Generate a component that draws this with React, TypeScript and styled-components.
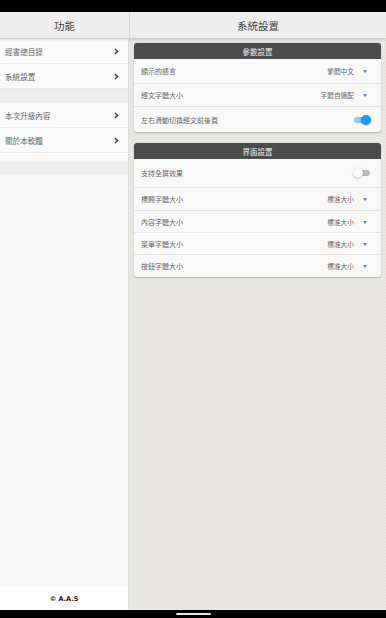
import React from "react";
import styled, { createGlobalStyle } from "styled-components";

const Global = createGlobalStyle`
  html, body { margin: 0; padding: 0; }
  body {
    width: 386px;
    height: 618px;
    overflow: hidden;
    font-family: "Noto Sans CJK TC", "Noto Sans", sans-serif;
    background: #000;
  }
  #root { height: 100%; }
`;

const Screen = styled.div`
  width: 386px;
  height: 618px;
  display: flex;
  flex-direction: column;
`;

const StatusBar = styled.div`
  height: 12px;
  background: #000;
  flex: none;
`;

const NavBar = styled.div`
  height: 8px;
  background: #000;
  flex: none;
  display: flex;
  justify-content: center;
  align-items: flex-start;
  padding-top: 3px;
  box-sizing: border-box;
`;

const HomeLine = styled.div`
  width: 35px;
  height: 1.5px;
  background: #e6e6e6;
  border-radius: 1px;
`;

const Header = styled.div`
  height: 27px;
  flex: none;
  display: flex;
  background: #eeeeee;
  border-bottom: 1px solid #d2d2d2;
  box-sizing: border-box;
  box-shadow: 0 1px 2px rgba(0, 0, 0, 0.12);
  position: relative;
  z-index: 1;
`;

const HeaderCell = styled.div<{ $w?: number }>`
  ${(p) => (p.$w ? `width: ${p.$w}px; flex: none;` : "flex: 1;")}
  display: flex;
  align-items: center;
  justify-content: center;
  font-size: 10.5px;
  color: #444;
  ${(p) => (p.$w ? "border-right: 1px solid #d6d6d6;" : "")}
`;

const Main = styled.div`
  flex: 1;
  display: flex;
  min-height: 0;
`;

const LeftPanel = styled.div`
  width: 128px;
  flex: none;
  display: flex;
  flex-direction: column;
  background: #f8f8f8;
  border-right: 1px solid #dedede;
`;

const MenuRow = styled.div`
  height: 25px;
  box-sizing: border-box;
  border-bottom: 1px solid #ececec;
  background: #fafafa;
  display: flex;
  align-items: center;
  justify-content: space-between;
  padding: 0 9px 0 5px;
  font-size: 7.6px;
  color: #666;
`;

const Band = styled.div<{ $h: number; $c: string }>`
  height: ${(p) => p.$h}px;
  background: ${(p) => p.$c};
  flex: none;
`;

const Spacer = styled.div`
  flex: 1;
`;

const Footer = styled.div`
  height: 23px;
  flex: none;
  background: #fff;
  display: flex;
  align-items: center;
  justify-content: center;
  font-family: "DejaVu Sans", sans-serif;
  font-weight: bold;
  font-size: 6.5px;
  color: #222;
`;

const RightPanel = styled.div`
  flex: 1;
  background-color: #e9e8e3;
  background-image: radial-gradient(rgba(0, 0, 0, 0.025) 0.6px, transparent 0.8px);
  background-size: 3px 3px;
  padding: 4px 5px 0 5px;
  display: flex;
  flex-direction: column;
  gap: 11px;
`;

const Card = styled.div`
  background: #f9f9f9;
  border-radius: 3px;
  box-shadow: 0 0.5px 1.5px rgba(0, 0, 0, 0.25);
  overflow: hidden;
`;

const CardHeader = styled.div`
  height: 16px;
  background: #4c4c4c;
  color: #f0f0f0;
  font-size: 7.5px;
  display: flex;
  align-items: center;
  justify-content: center;
`;

const SettingRow = styled.div<{ $h: number }>`
  height: ${(p) => p.$h}px;
  box-sizing: border-box;
  display: flex;
  align-items: center;
  justify-content: space-between;
  padding: 0 10px 0 7px;
  font-size: 7px;
  color: #666;
  & + & {
    border-top: 1px solid #e6e6e6;
  }
`;

const Value = styled.div`
  display: flex;
  align-items: center;
  gap: 9px;
  font-size: 6.7px;
  color: #666;
  padding-right: 4px;
`;

const Caret = styled.span`
  width: 0;
  height: 0;
  border-left: 2.5px solid transparent;
  border-right: 2.5px solid transparent;
  border-top: 3px solid #2196f3;
  margin-top: 1px;
`;

const Track = styled.div<{ $on: boolean }>`
  position: relative;
  width: 16px;
  height: 6px;
  border-radius: 3px;
  background: ${(p) => (p.$on ? "#8fc6f5" : "#b9b9b9")};
  margin-right: 1px;
`;

const Knob = styled.div<{ $on: boolean }>`
  position: absolute;
  top: -2px;
  ${(p) => (p.$on ? "right: -1px;" : "left: -1px;")}
  width: 10px;
  height: 10px;
  border-radius: 50%;
  background: ${(p) => (p.$on ? "#2196f3" : "#fafafa")};
  box-shadow: 0 0.5px 1.5px rgba(0, 0, 0, 0.35);
`;

const Chevron = () => (
  <svg width="5" height="7" viewBox="0 0 5 7">
    <polyline points="1,1 3.6,3.5 1,6" fill="none" stroke="#333" strokeWidth="1.3" />
  </svg>
);

const Toggle = ({ on }: { on: boolean }) => (
  <Track $on={on}>
    <Knob $on={on} />
  </Track>
);

const Select = ({ value }: { value: string }) => (
  <Value>
    <span>{value}</span>
    <Caret />
  </Value>
);

export default function App() {
  return (
    <Screen>
      <Global />
      <StatusBar />
      <Header>
        <HeaderCell $w={129}>功能</HeaderCell>
        <HeaderCell>系統設置</HeaderCell>
      </Header>
      <Main>
        <LeftPanel>
          <MenuRow>
            <span>經書總目錄</span>
            <Chevron />
          </MenuRow>
          <MenuRow>
            <span>系統設置</span>
            <Chevron />
          </MenuRow>
          <Band $h={14} $c="#f0f0f0" />
          <MenuRow>
            <span>本次升級內容</span>
            <Chevron />
          </MenuRow>
          <MenuRow>
            <span>關於本軟體</span>
            <Chevron />
          </MenuRow>
          <Band $h={9} $c="#fafafa" />
          <Band $h={13} $c="#f0f0f0" />
          <Spacer />
          <Footer>© A.A.S</Footer>
        </LeftPanel>
        <RightPanel>
          <Card>
            <CardHeader>參數設置</CardHeader>
            <SettingRow $h={24}>
              <span>顯示的語言</span>
              <Select value="繁體中文" />
            </SettingRow>
            <SettingRow $h={23}>
              <span>經文字體大小</span>
              <Select value="字體自適配" />
            </SettingRow>
            <SettingRow $h={26}>
              <span>左右滑動切換經文前後頁</span>
              <Toggle on />
            </SettingRow>
          </Card>
          <Card>
            <CardHeader>界面設置</CardHeader>
            <SettingRow $h={28}>
              <span>支持全屏效果</span>
              <Toggle on={false} />
            </SettingRow>
            <SettingRow $h={23}>
              <span>標題字體大小</span>
              <Select value="標准大小" />
            </SettingRow>
            <SettingRow $h={22}>
              <span>內容字體大小</span>
              <Select value="標准大小" />
            </SettingRow>
            <SettingRow $h={22}>
              <span>菜單字體大小</span>
              <Select value="標准大小" />
            </SettingRow>
            <SettingRow $h={23}>
              <span>按鈕字體大小</span>
              <Select value="標准大小" />
            </SettingRow>
          </Card>
        </RightPanel>
      </Main>
      <NavBar>
        <HomeLine />
      </NavBar>
    </Screen>
  );
}
